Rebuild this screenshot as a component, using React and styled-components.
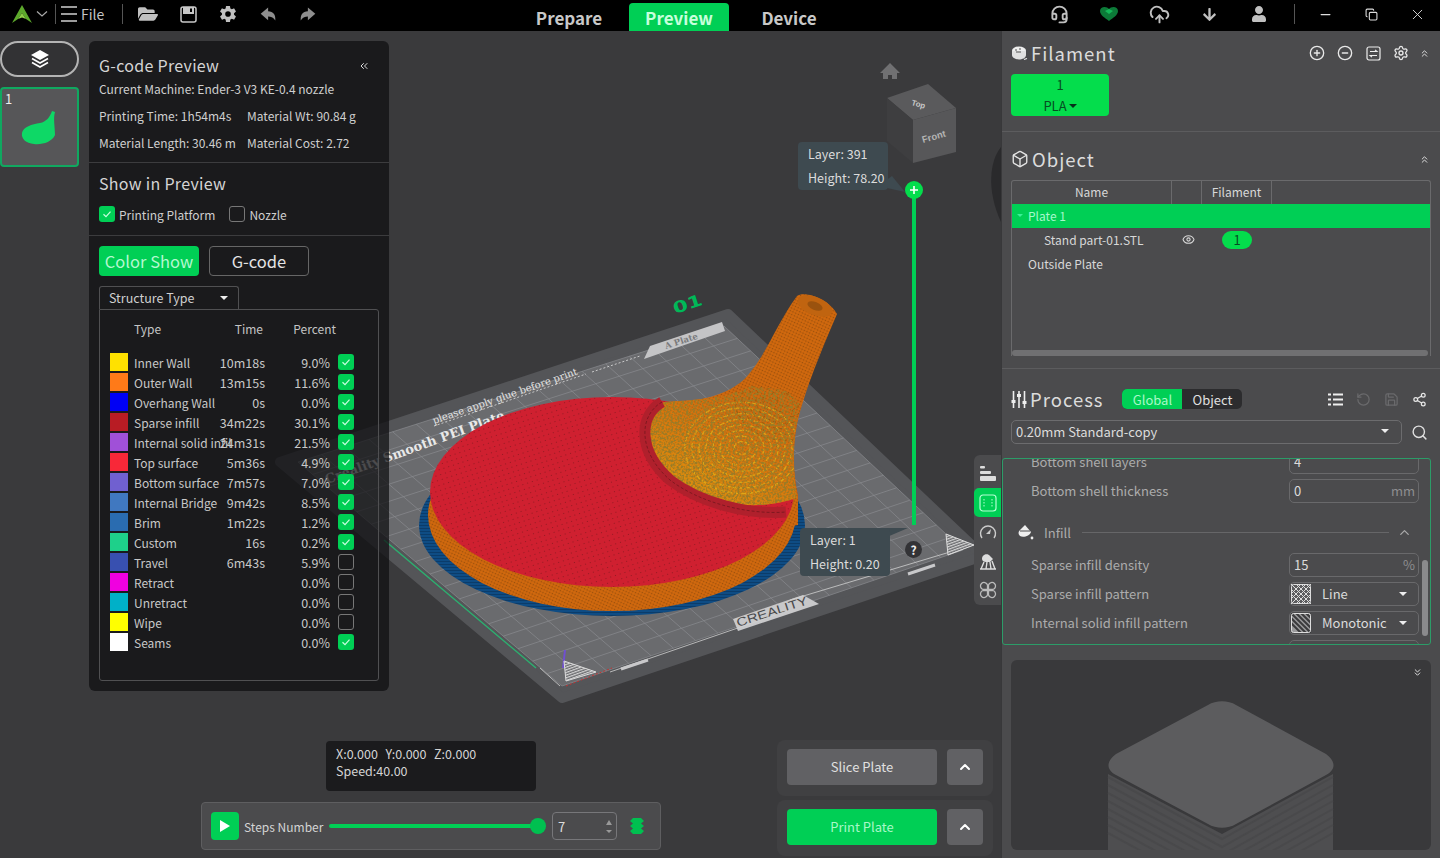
import React from 'react';
import styled, { createGlobalStyle } from 'styled-components';
import {
  Box, ChevronsDown, ChevronsLeft, ChevronsUp, ChevronUp, CircleMinus, CirclePlus,
  CloudUpload, Copy, Eye, Headset, Minus, RotateCcw, Save, Search, Settings, Share2, X,
} from 'lucide-react';
import { FaArrowDown, FaFolderOpen, FaUser } from 'react-icons/fa';
import { IoArrowRedoSharp, IoArrowUndoSharp, IoSettingsSharp } from 'react-icons/io5';

const GREEN = '#00cf55';
const BRIGHT = '#04dd4c';

const Global = createGlobalStyle`
  html, body { margin: 0; padding: 0; height: 100%; background: #3a3a3c; overflow: hidden; }
  body { font-family: "Noto Sans CJK SC", "Noto Sans", sans-serif; color: #d8d8d8; font-size: 13px; }
  * { box-sizing: border-box; }
`;

const Page = styled.div`
  width: 1440px;
  height: 858px;
  display: flex;
  flex-direction: column;
  overflow: hidden;
`;

/* ---- top bar ---- */

const TopBar = styled.header`
  flex: 0 0 31px;
  background: #000;
  display: grid;
  grid-template-columns: 519px 320px 1fr;
  align-items: center;
`;

const BarGroup = styled.div`
  display: flex;
  align-items: center;
  justify-content: ${p => (p.$end ? 'flex-end' : 'flex-start')};
  height: 31px;
  padding-bottom: 3px;
`;

const BarDivider = styled.span`
  width: 1px;
  height: 20px;
  background: #555;
  margin: ${p => p.$margin};
`;

const FileLabel = styled.span`
  font-size: 14px;
  color: #c4c4c4;
  margin-left: 4px;
`;

const LogoSlot = styled.span`
  display: flex;
  margin-left: 11px;
`;

const ToolIcon = styled.span`
  flex: 0 0 ${p => p.$w || 40}px;
  display: flex;
  align-items: center;
  justify-content: center;
  color: ${p => p.$color || '#c0c0c0'};
`;

const Tabs = styled.nav`
  display: flex;
  gap: 10px;
  height: 31px;
  align-items: flex-end;
`;

const Tab = styled.span`
  width: 100px;
  height: 28px;
  display: flex;
  align-items: center;
  justify-content: center;
  font-size: 17px;
  font-weight: 700;
  border-radius: 4px 4px 0 0;
  color: ${p => (p.$active ? '#c6ffdc' : '#c8c8c8')};
  background: ${p => (p.$active ? GREEN : 'transparent')};
`;

/* ---- main ---- */

const Main = styled.main`
  flex: 1;
  display: flex;
  min-height: 0;
`;

const Viewport = styled.div`
  position: relative;
  flex: 0 0 1001px;
  background: #3a3a3c;
  overflow: hidden;
`;

const SceneSvg = styled.svg`
  position: absolute;
  inset: 0;
  width: 1001px;
  height: 827px;
`;

const Dock = styled.div`
  position: relative;
  display: flex;
  align-items: flex-start;
  gap: 10px;
  padding-top: 10px;
`;

const Rail = styled.div`
  width: 79px;
  display: flex;
  flex-direction: column;
  gap: 10px;
`;

const PlatesButton = styled.div`
  height: 36px;
  border: 2px solid #b4b4b4;
  border-radius: 18px;
  background: #323234;
  display: flex;
  align-items: center;
  justify-content: center;
`;

const Thumb = styled.div`
  position: relative;
  height: 80px;
  border: 2px solid #10a860;
  border-radius: 4px;
  background: #565658;
  display: flex;
  align-items: center;
  justify-content: center;
  padding-top: 3px;
`;

const ThumbIndex = styled.span`
  position: absolute;
  top: 0;
  left: 3px;
  font-size: 13px;
  color: #eee;
`;

/* ---- g-code panel ---- */

const Panel = styled.aside`
  width: 300px;
  height: 650px;
  background: rgba(14, 14, 16, 0.72);
  border-radius: 6px;
  display: flex;
  flex-direction: column;
`;

const PanelSection = styled.section`
  padding: ${p => p.$pad};
  border-bottom: ${p => (p.$last ? 'none' : '1px solid #3c3c3e')};
  ${p => p.$last && 'flex: 1; display: flex; flex-direction: column;'}
`;

const PanelHead = styled.div`
  display: flex;
  justify-content: space-between;
  align-items: center;
  padding-right: 9px;
  color: #ddd;
`;

const PanelTitle = styled.h2`
  margin: 0;
  font-size: 16px;
  line-height: 21px;
  font-weight: 400;
  letter-spacing: 0.3px;
  color: #d4d4d4;
`;

const InfoGrid = styled.div`
  display: grid;
  grid-template-columns: 148px 1fr;
  grid-auto-rows: 27px;
  align-items: center;
  margin-top: -1px;
  font-size: 12px;
  color: #cfcfcf;
  white-space: nowrap;
`;

const InfoWide = styled.span`
  grid-column: 1 / -1;
`;

const CheckRow = styled.div`
  display: flex;
  align-items: center;
  height: 18px;
  font-size: 12px;
  color: #cfcfcf;
  margin-top: 11px;
`;

const CheckBox = styled.span`
  flex: none;
  width: 16px;
  height: 16px;
  border-radius: 3px;
  display: inline-flex;
  align-items: center;
  justify-content: center;
  background: ${p => (p.$on ? GREEN : 'transparent')};
  border: ${p => (p.$on ? 'none' : '1px solid #777')};
  margin: ${p => p.$margin || '0'};
`;

const ModeRow = styled.div`
  display: flex;
  gap: 10px;
`;

const ModeButton = styled.span`
  width: 100px;
  height: 30px;
  padding-bottom: 1px;
  border-radius: 4px;
  display: flex;
  align-items: center;
  justify-content: center;
  font-size: 16.5px;
  color: ${p => (p.$on ? '#b4f8d0' : '#e4e4e4')};
  background: ${p => (p.$on ? GREEN : 'transparent')};
  border: ${p => (p.$on ? 'none' : '1px solid #666')};
`;

const TypeSelect = styled.div`
  width: 140px;
  height: 23px;
  margin-top: 10px;
  padding: 0 10px 1px 9px;
  border: 1px solid #505052;
  border-bottom: none;
  border-radius: 3px 3px 0 0;
  display: flex;
  align-items: center;
  justify-content: space-between;
  font-size: 12.5px;
  color: #d0d0d0;
`;

const DownTriangle = styled.span`
  width: 0;
  height: 0;
  border-left: ${p => p.$s || 4}px solid transparent;
  border-right: ${p => p.$s || 4}px solid transparent;
  border-top: ${p => p.$s || 4}px solid ${p => p.$color || '#eee'};
`;

const TypeBox = styled.div`
  width: 280px;
  height: 372px;
  border: 1px solid #505052;
  border-radius: 0 3px 3px 3px;
  padding: 8px 10px 0;
  font-size: 12.5px;
`;

const TypeRow = styled.div`
  display: grid;
  grid-template-columns: 18px 104px 33px 65px 8px 16px;
  align-items: center;
  height: 20px;
  color: #c8c8c8;
  white-space: nowrap;
`;

const HeadRow = styled(TypeRow)`
  margin-bottom: 14px;
  font-size: 12px;
  color: #c4c4c4;
`;

const Swatch = styled.span`
  width: 18px;
  height: 18px;
  background: ${p => p.$color};
`;

const TypeName = styled.span`
  padding-left: 6px;
  font-size: 12px;
  overflow: hidden;
`;

const TypeNum = styled.span`
  justify-self: end;
`;

const HeadCell = styled.span`
  grid-column: ${p => p.$col};
  justify-self: ${p => p.$align || 'start'};
  padding-left: ${p => p.$pad || 0}px;
  margin-right: ${p => p.$mr || 0}px;
`;

/* ---- overlays on the 3d view ---- */

const LayerTip = styled.div`
  position: absolute;
  left: ${p => p.$x}px;
  top: ${p => p.$y}px;
  width: 90px;
  height: 48px;
  padding: 0 10px;
  background: #3e4a50;
  border-radius: 4px;
  font-size: 12.5px;
  line-height: 24px;
  color: #dcdcdc;
  white-space: nowrap;
`;

const SliderLine = styled.div`
  position: absolute;
  left: 912px;
  top: 159px;
  width: 4px;
  height: 335px;
  background: ${GREEN};
`;

const SliderKnob = styled.div`
  position: absolute;
  left: 905px;
  top: 150px;
  width: 18px;
  height: 18px;
  border-radius: 50%;
  background: ${BRIGHT};
  display: flex;
  align-items: center;
  justify-content: center;
`;

const HelpDot = styled.div`
  position: absolute;
  left: 905px;
  top: 510px;
  width: 17px;
  height: 17px;
  border-radius: 50%;
  background: #333336;
  color: #eee;
  font-size: 12px;
  font-weight: 700;
  display: flex;
  align-items: center;
  justify-content: center;
`;

const SideTabs = styled.div`
  position: absolute;
  right: 0;
  top: 424px;
  width: 27px;
  height: 150px;
  background: #4b4b4d;
  border-radius: 6px 0 0 6px;
  display: flex;
  flex-direction: column;
  align-items: center;
  padding-top: 3px;
`;

const SideTab = styled.span`
  flex: none;
  width: 27px;
  height: ${p => p.$h || 29}px;
  display: flex;
  align-items: center;
  justify-content: center;
  background: ${p => (p.$on ? GREEN : 'transparent')};
  border-radius: 5px 0 0 5px;
`;

const CoordBox = styled.div`
  position: absolute;
  left: 326px;
  top: 710px;
  width: 210px;
  height: 50px;
  padding: 4px 10px;
  background: #1b1b1d;
  border-radius: 4px;
  font-size: 12.5px;
  line-height: 17px;
  word-spacing: 1px;
  color: #d4d4d4;
  white-space: pre;
`;

const StepsBar = styled.div`
  position: absolute;
  left: 201px;
  top: 771px;
  width: 460px;
  height: 48px;
  padding-left: 9px;
  background: #4b4b4d;
  border: 1px solid #5e5e60;
  border-radius: 4px;
  display: flex;
  align-items: center;
`;

const PlayButton = styled.span`
  flex: none;
  width: 28px;
  height: 28px;
  border-radius: 4px;
  background: ${GREEN};
  display: flex;
  align-items: center;
  justify-content: center;
`;

const StepsLabel = styled.span`
  flex: none;
  width: 85px;
  margin-left: 5px;
  font-size: 12px;
  color: #d4d4d4;
  white-space: nowrap;
`;

const Track = styled.div`
  flex: none;
  position: relative;
  width: 209px;
  height: 4px;
  background: ${GREEN};
  border-radius: 2px;
  margin-right: 14px;
`;

const TrackKnob = styled.span`
  position: absolute;
  right: -8px;
  top: -6px;
  width: 16px;
  height: 16px;
  border-radius: 50%;
  background: #00c050;
`;

const StepInput = styled.div`
  flex: none;
  width: 65px;
  height: 28px;
  border: 1px solid #77777a;
  border-radius: 4px;
  padding: 0 4px 0 5px;
  display: flex;
  align-items: center;
  justify-content: space-between;
  color: #ddd;
`;

const Spinners = styled.span`
  display: flex;
  flex-direction: column;
  gap: 5px;
`;

const UpTriangle = styled.span`
  width: 0;
  height: 0;
  border-left: 3px solid transparent;
  border-right: 3px solid transparent;
  border-bottom: 5px solid #999;
`;

const ActionStack = styled.div`
  position: absolute;
  left: 777px;
  top: 709px;
  width: 216px;
  display: flex;
  flex-direction: column;
  gap: 4px;
`;

const ActionRow = styled.div`
  height: 56px;
  padding: 9px 10px;
  background: #404042;
  border-radius: 8px;
  display: flex;
  gap: 10px;
`;

const ActionButton = styled.span`
  flex: none;
  width: 150px;
  height: 36px;
  padding-bottom: 2px;
  border-radius: 4px;
  background: ${p => (p.$go ? GREEN : '#616164')};
  color: ${p => (p.$go ? '#a8f8c8' : '#e0e0e0')};
  display: flex;
  align-items: center;
  justify-content: center;
`;

const ActionMore = styled.span`
  flex: none;
  width: 36px;
  height: 36px;
  border-radius: 4px;
  background: #616164;
  color: #fff;
  display: flex;
  align-items: center;
  justify-content: center;
`;

/* ---- right sidebar ---- */

const Sidebar = styled.div`
  flex: 0 0 439px;
  background: #4b4b4d;
  border-left: 1px solid #38383a;
  display: flex;
  flex-direction: column;
`;

const SideSection = styled.section`
  height: ${p => p.$h}px;
  padding: ${p => p.$pad};
  border-bottom: ${p => (p.$line ? '1px solid #5c5c5e' : 'none')};
`;

const SectionHead = styled.div`
  height: 24px;
  display: flex;
  align-items: center;
  color: #e4e4e4;
`;

const SectionTitle = styled.h3`
  margin: 0 0 0 3px;
  font-size: 18.5px;
  font-weight: 400;
  letter-spacing: 1px;
  color: #dcdcdc;
`;

const HeadTools = styled.div`
  margin-left: auto;
  display: flex;
  align-items: center;
  color: #e8e8e8;
`;

const HeadTool = styled.span`
  width: ${p => p.$w || 28}px;
  display: flex;
  justify-content: center;
  color: ${p => p.$color || 'inherit'};
`;

const FilamentChip = styled.div`
  width: 98px;
  height: 42px;
  margin-top: 9px;
  border-radius: 4px;
  background: ${BRIGHT};
  color: #064d22;
  font-size: 13px;
  line-height: 21px;
  text-align: center;
`;

const ChipLine = styled.div`
  display: flex;
  align-items: center;
  justify-content: center;
  gap: 2px;
`;

const ObjectTable = styled.div`
  position: relative;
  width: 420px;
  height: 176px;
  margin-top: 9px;
  border: 1px solid #6a6a6c;
  border-bottom-width: 0;
  border-radius: 3px 3px 0 0;
  color: #d8d8d8;
  font-size: 12px;
`;

const TableHead = styled.div`
  display: grid;
  grid-template-columns: 160px 30px 70px 1fr;
  height: 23px;
`;

const HeadCol = styled.span`
  display: flex;
  align-items: center;
  justify-content: center;
  padding-bottom: 3px;
  border-right: ${p => (p.$open ? 'none' : '1px solid #6a6a6c')};
`;

const PlateRow = styled.div`
  height: 24px;
  padding: 0 0 1px 5px;
  background: ${GREEN};
  color: #a6f8cc;
  display: flex;
  align-items: center;
  gap: 5px;
`;

const ObjRow = styled.div`
  display: grid;
  grid-template-columns: ${p => (p.$sub ? '32px 138px 30px auto' : '16px 1fr')};
  align-items: center;
  height: 24px;
  padding-bottom: 1px;
`;

const FilamentPill = styled.span`
  width: 30px;
  height: 18px;
  border-radius: 9px;
  background: ${BRIGHT};
  color: #064d22;
  font-size: 13px;
  display: flex;
  align-items: center;
  justify-content: center;
  margin-left: 10px;
`;

const HScroll = styled.div`
  position: absolute;
  left: 0;
  right: 2px;
  bottom: 0;
  height: 6px;
  background: #707072;
  border-radius: 3px;
`;

const ModeSwitch = styled.div`
  display: flex;
  width: 120px;
  height: 20px;
  margin-left: 19px;
  background: #2c2c2e;
  border-radius: 5px;
  font-size: 13px;
  overflow: hidden;
`;

const SwitchItem = styled.span`
  width: 60px;
  display: flex;
  align-items: center;
  justify-content: center;
  background: ${p => (p.$on ? GREEN : 'transparent')};
  color: ${p => (p.$on ? '#a8f8c8' : '#e0e0e0')};
`;

const PresetRow = styled.div`
  display: flex;
  align-items: center;
  gap: 9px;
  margin-top: 9px;
  color: #e0e0e0;
`;

const PresetSelect = styled.div`
  width: 391px;
  height: 24px;
  padding: 0 12px 2px 4px;
  border: 1px solid #6c6c6e;
  border-radius: 5px;
  display: flex;
  align-items: center;
  justify-content: space-between;
  font-size: 13px;
  color: #dcdcdc;
`;

const SettingsBox = styled.div`
  position: relative;
  width: 429px;
  height: 187px;
  margin: 14px 0 0 -9px;
  border: 1px solid #2c9c68;
  border-radius: 3px;
  overflow: hidden;
`;

const SettingsFlow = styled.div`
  margin-top: -12px;
  padding: 0 11px 0 28px;
  font-size: 13px;
  color: #acacac;
`;

const SettingRow = styled.div`
  display: flex;
  align-items: center;
  justify-content: space-between;
  height: 29px;
  margin-bottom: ${p => p.$after || 0}px;
`;

const Field = styled.div`
  width: 130px;
  height: 24px;
  padding: 0 3px 0 4px;
  border: 1px solid #69696b;
  border-radius: 5px;
  display: flex;
  align-items: center;
  justify-content: space-between;
  color: #dcdcdc;
  font-size: 13px;
`;

const FieldUnit = styled.span`
  color: #8e8e90;
`;

const PatternField = styled(Field)`
  padding: 0 11px 0 1px;
`;

const PatternName = styled.span`
  flex: 1;
  margin-left: 11px;
`;

const GroupHead = styled.div`
  display: flex;
  align-items: center;
  height: 24px;
  margin: 0 0 6px -14px;
`;

const GroupLabel = styled.span`
  margin-left: 10px;
`;

const GroupRule = styled.span`
  flex: 1;
  height: 1px;
  background: #666668;
  margin-left: 11px;
`;

const GroupChevron = styled.span`
  width: 30px;
  display: flex;
  justify-content: center;
  color: #aaa;
`;

const VScroll = styled.div`
  position: absolute;
  right: 2px;
  top: 101px;
  width: 6px;
  height: 76px;
  background: #8a8a8c;
  border-radius: 3px;
`;

const ModelPreview = styled.div`
  position: relative;
  width: 420px;
  height: 190px;
  margin-top: 15px;
  background: #39393b;
  border-radius: 6px;
  overflow: hidden;
`;

const PreviewToggle = styled.span`
  position: absolute;
  top: 7px;
  right: 8px;
  color: #eee;
  display: flex;
`;

const CubeSvg = styled.svg`
  display: block;
  width: 420px;
  height: 190px;
`;

/* ---- drawings ---- */

const Logo = () => (
  <svg width="22" height="20" viewBox="0 0 22 20">
    <path d="M11 1 L21 19 L15 15 L11 9 L7 15 L1 19 Z" fill="#5da92c" />
    <path d="M11 9 L15 15 L11 13.5 L7 15 Z" fill="#8fd048" />
  </svg>
);

const SmallChevron = () => (
  <svg width="12" height="8" viewBox="0 0 12 8" style={{ marginLeft: 3 }}>
    <path d="M1 1.5 L6 6 L11 1.5" fill="none" stroke="#aaa" strokeWidth="1.2" />
  </svg>
);

const Hamburger = () => (
  <svg width="16" height="18" viewBox="0 0 16 18">
    <path d="M0 2 H16 M0 9 H16 M0 16 H16" stroke="#d0d0d0" strokeWidth="1.6" />
  </svg>
);

const Floppy = () => (
  <svg width="17" height="17" viewBox="0 0 17 17">
    <rect x="1" y="1" width="15" height="15" rx="2" fill="none" stroke="#c8c8c8" strokeWidth="1.5" />
    <rect x="3" y="1" width="11" height="7" fill="#c8c8c8" />
    <rect x="10" y="2.5" width="2" height="3.5" fill="#000" />
  </svg>
);

const Heart = () => (
  <svg width="20" height="16" viewBox="0 0 20 16">
    <path d="M10 3 C8 0 1 0 1 5 C1 9 6 12 10 15 C14 12 19 9 19 5 C19 0 12 0 10 3 Z" fill="#0c7a38" />
    <path d="M10 3 L14 5 L10 8 L6 5 Z" fill="#14b858" />
  </svg>
);

const LayersIcon = () => (
  <svg width="22" height="20" viewBox="0 0 22 20">
    <path d="M11 1 L20 6 L11 11 L2 6 Z" fill="#fff" />
    <path d="M3 9.5 L11 14 L19 9.5 M3 13.5 L11 18 L19 13.5" fill="none" stroke="#fff" strokeWidth="1.6" />
  </svg>
);

const PaddleThumb = () => (
  <svg width="40" height="40" viewBox="0 0 40 40">
    <path d="M32 2 L35 3 C33 9 35 18 35 26 C32 33 22 36 14 35 C6 34 1 30 2 24 C3 18 12 15 20 14 C26 13 30 8 32 2 Z" fill="#0ed866" />
  </svg>
);

const Tick = ({ size = 10 }) => (
  <svg width={size} height={size} viewBox="0 0 10 10">
    <path d="M1.5 5.2 L4 7.6 L8.5 2.6" fill="none" stroke="#c8ffe0" strokeWidth="1.2" />
  </svg>
);

const SpoolIcon = () => (
  <svg width="17" height="15" viewBox="0 0 17 15">
    <ellipse cx="8" cy="4.5" rx="7" ry="4" fill="#eee" />
    <path d="M1 5 V9 C1 12 5 13.5 8 13.5 C11 13.5 15 12 15 9 V5" fill="#e0e0e0" />
    <path d="M4 4 h2 M8 3 h2 M5 6 h5" stroke="#555" strokeWidth="1" />
    <path d="M13 13.5 L16 12.5" stroke="#eee" strokeWidth="1.2" />
  </svg>
);

const SwapIcon = () => (
  <svg width="15" height="15" viewBox="0 0 15 15">
    <rect x="1" y="1" width="13" height="13" rx="2" fill="none" stroke="#eee" strokeWidth="1.2" />
    <path d="M4 5.5 H11 L9 3.8 M11 9.5 H4 L6 11.2" fill="none" stroke="#eee" strokeWidth="1.1" />
  </svg>
);

const SlidersIcon = () => (
  <svg width="16" height="17" viewBox="0 0 16 17">
    <path d="M2.5 0 V17 M8 0 V17 M13.5 0 V17" stroke="#eee" strokeWidth="1.6" />
    <rect x="0.5" y="9" width="4" height="3" fill="#eee" />
    <rect x="6" y="3" width="4" height="3" fill="#eee" />
    <rect x="11.5" y="10" width="4" height="3" fill="#eee" />
  </svg>
);

const ListIcon = () => (
  <svg width="15" height="13" viewBox="0 0 15 13">
    <path d="M5 1.5 H15 M5 6.5 H15 M5 11.5 H15 M0 1.5 H3 M0 6.5 H3 M0 11.5 H3" stroke="#eee" strokeWidth="2" />
  </svg>
);

const BucketIcon = () => (
  <svg width="17" height="16" viewBox="0 0 17 16">
    <path d="M3 6 L8 1 L14 8 C13 12 6 14 3 12 C1 10 1 8 3 6 Z" fill="#eee" />
    <path d="M3 7 H13" stroke="#4b4b4d" strokeWidth="1" />
    <circle cx="15" cy="14" r="1.4" fill="#eee" />
  </svg>
);

const HatchIcon = ({ cross }) => (
  <svg width="20" height="20" viewBox="0 0 20 20">
    <rect x="0.5" y="0.5" width="19" height="19" rx="2" fill={cross ? '#5c5c5e' : '#9a9a9c'} />
    {Array.from({ length: 7 }, (_, i) => (
      <path key={i} d={`M${i * 5 - 10} 0 L${i * 5 + 10} 20`} stroke={cross ? '#ddd' : '#3a3a3c'} strokeWidth={cross ? 1 : 2} />
    ))}
    {cross && Array.from({ length: 7 }, (_, i) => (
      <path key={i} d={`M${i * 5 - 10} 20 L${i * 5 + 10} 0`} stroke="#ddd" strokeWidth="1" />
    ))}
    <rect x="0.5" y="0.5" width="19" height="19" rx="2" fill="none" stroke="#ddd" />
  </svg>
);

const StackIcon = () => (
  <svg width="18" height="18" viewBox="0 0 18 18">
    <path d="M5 1 H13 L16 4 L13 6.5 L16 9 L13 11.5 L16 14 L13 17 H5 L2 14 L5 11.5 L2 9 L5 6.5 L2 4 Z" fill="#00c050" />
  </svg>
);

/* the build plate is a quad in perspective: grid lines are interpolated between its corners */
const lerp = (a, b, t) => [a[0] + (b[0] - a[0]) * t, a[1] + (b[1] - a[1]) * t];
const fmt = p => `${p[0].toFixed(1)} ${p[1].toFixed(1)}`;
const IT = [724, 326];
const IR = [963, 550];
const IB = [562, 686];
const IL = [298, 462];
const DIVS = 18;

function plateGrid() {
  const lines = [];
  for (let i = 0; i <= DIVS; i++) {
    const t = i / DIVS;
    lines.push(`M${fmt(lerp(IL, IT, t))} L${fmt(lerp(IB, IR, t))}`);
    lines.push(`M${fmt(lerp(IL, IB, t))} L${fmt(lerp(IT, IR, t))}`);
  }
  return lines.join(' ');
}

const HANDLE = 'M640 404 C700 404 735 395 752 370 C768 350 778 322 797 296 C805 290 830 300 837 314 C826 340 812 372 802 405 C792 436 792 470 798 495 L798 525 L700 540 Z';
const CRESCENT = 'M664 402 C640 416 640 452 672 478 C708 506 755 512 797 498 C791 462 794 430 800 405 C790 385 770 390 752 386 C720 400 690 400 664 402 Z';
const RING = 'M662 402 C638 416 638 452 670 480 C700 503 748 515 786 512';

// concentric toolpath swirls over the infill crescent
const swirlSet = (cx, cy, count) => Array.from({ length: count }, (_, i) => {
  const r = 8 + i * 7;
  return `M${cx - r} ${cy} A${r} ${r * 0.8} 0 1 1 ${cx + r} ${cy} A${r} ${r * 0.8} 0 1 1 ${cx - r} ${cy}`;
}).join(' ');

const Scene = () => (
  <SceneSvg viewBox="0 31 1001 827">
    <defs>
      <pattern id="redDots" width="5" height="5" patternUnits="userSpaceOnUse" patternTransform="rotate(-18)">
        <rect width="5" height="5" fill="#cf2030" />
        <circle cx="2.5" cy="2.5" r="0.6" fill="#8c1820" />
      </pattern>
      <pattern id="orangeWeave" width="3" height="3" patternUnits="userSpaceOnUse" patternTransform="rotate(25)">
        <rect width="3" height="3" fill="#d2690e" />
        <circle cx="1.5" cy="1.5" r="0.85" fill="#9a500c" />
      </pattern>
      <linearGradient id="infillFade" x1="0.1" y1="1" x2="0.8" y2="0">
        <stop offset="0" stopColor="#e8c410" stopOpacity="0.6" />
        <stop offset="0.6" stopColor="#e89010" stopOpacity="0.3" />
        <stop offset="1" stopColor="#e07310" stopOpacity="0.05" />
      </linearGradient>
      <filter id="mottle" x="0" y="0" width="1" height="1">
        <feTurbulence type="fractalNoise" baseFrequency="0.45" numOctaves="2" seed="4" />
        <feColorMatrix values="0 0 0 0 0.32  0 0 0 0 0.2  0 0 0 0 0.02  0 0 0 4 -1.7" />
        <feComposite in2="SourceGraphic" operator="in" />
      </filter>
      <pattern id="blueBrim" width="3" height="3" patternUnits="userSpaceOnUse">
        <rect width="3" height="3" fill="#0e4c84" />
        <rect width="3" height="1" fill="#0b3c6a" />
      </pattern>
      <pattern id="logoHatch" width="2.5" height="2.5" patternUnits="userSpaceOnUse" patternTransform="rotate(70)">
        <rect width="2.5" height="2.5" fill="#6a6b6e" />
        <rect width="1.2" height="2.5" fill="#d4d4d4" />
      </pattern>
      <clipPath id="crescentClip"><path d={CRESCENT} /></clipPath>
    </defs>

    <polygon points="728,314 983,556 562,698 280,462" fill="#545558" stroke="#545558" strokeWidth="10" strokeLinejoin="round" />
    <polygon points={`${IT} ${IR} ${IB} ${IL}`} fill="#6a6b6e" />
    <path d={plateGrid()} stroke="#8a8b8f" strokeWidth="0.7" fill="none" />

    <path d="M434 426 L586 374 M592 372 L640 356" stroke="#e0e0e0" strokeWidth="0.8" strokeDasharray="2 2" />
    <text x="434" y="424" transform="rotate(-19 434 424)" fontFamily="DejaVu Serif, serif" fontSize="10" fill="#e4e4e4">please apply glue before print</text>
    <text x="327" y="484" transform="rotate(-20 327 484)" fontFamily="DejaVu Serif, serif" fontSize="13" fontWeight="700" fill="#e8e8e8">Creality Smooth PEI Plate</text>
    <polygon points="644,359 650,346 722,322 725,331" fill="#c4c4c6" />
    <text x="666" y="349" transform="rotate(-18 666 349)" fontFamily="DejaVu Serif, serif" fontSize="8.5" fontWeight="700" fill="#7a7a7c">A Plate</text>
    <polygon points="733,619 803,595 819,604 738,631" fill="#c8c8ca" />
    <text x="738" y="627" transform="rotate(-18 738 627)" fontFamily="Liberation Sans, sans-serif" fontSize="12" fill="#4a4a4c" textLength="74" lengthAdjust="spacingAndGlyphs">CREALITY</text>
    <text x="675" y="314" transform="rotate(-18 675 314)" fontFamily="DejaVu Sans, sans-serif" fontSize="16" fontWeight="700" fill="#00b858" textLength="30" lengthAdjust="spacingAndGlyphs">01</text>

    <path d="M384 540 L536 668" stroke="#2cb070" strokeWidth="1.4" />
    <path d="M540 668 L560 686 M790 600 L950 552 M610 672 L790 610" stroke="#d0d0d0" strokeWidth="0.8" />
    <path d="M621 669 L648 660 M908 574 L935 565" stroke="#c8c8ca" strokeWidth="3" />
    <path d="M565 650 L563 668" stroke="#7050d0" strokeWidth="2" />
    <path d="M566 686 L612 668" stroke="#c83030" strokeWidth="1" strokeDasharray="2 2" />
    <polygon points="564,661 596,672 566,681" fill="url(#logoHatch)" stroke="#ddd" strokeWidth="1" />
    <polygon points="946,534 974,545 948,555" fill="url(#logoHatch)" stroke="#ddd" strokeWidth="1" />

    <ellipse cx="612" cy="525" rx="193" ry="91" fill="url(#blueBrim)" />
    <ellipse cx="612" cy="515" rx="184" ry="96" fill="url(#orangeWeave)" />
    <path d={HANDLE} fill="url(#orangeWeave)" />
    <ellipse cx="815" cy="306" rx="18" ry="9" transform="rotate(22 815 306)" fill="#c06410" />
    <ellipse cx="815" cy="306" rx="8" ry="4" transform="rotate(22 815 306)" fill="#9a520e" />
    <ellipse cx="612" cy="492" rx="182" ry="95" fill="url(#redDots)" />
    <path d={CRESCENT} fill="url(#orangeWeave)" />
    <path d={CRESCENT} fill="url(#infillFade)" />
    <g clipPath="url(#crescentClip)">
      <path d={swirlSet(742, 448, 8)} fill="none" stroke="#e0b018" strokeWidth="1.4" strokeDasharray="5 2" opacity="0.8" />
      <path d={swirlSet(785, 400, 7)} fill="none" stroke="#8a5c10" strokeWidth="1.2" strokeDasharray="3 3" opacity="0.7" />
    </g>
    <path d={CRESCENT} fill="#000" filter="url(#mottle)" />
    <path d={RING} fill="none" stroke="#b0202c" strokeWidth="11" />
    <path d={RING} fill="none" stroke="#801820" strokeWidth="1" strokeDasharray="3 2" />

    <path d="M880 73 L890 63 L900 73 H897 V79 H892 V75 H888 V79 H883 V73 Z" fill="#707072" />
    <polygon points="887,98 928,84 956,108 913,120" fill="#5a5a5c" />
    <polygon points="913,120 956,108 956,152 913,163" fill="#575759" />
    <polygon points="887,98 913,120 913,163 887,141" fill="#3e3e40" />
    <text x="911" y="105" transform="rotate(15 911 105)" fontFamily="Liberation Sans, sans-serif" fontSize="8" fontWeight="700" fill="#c8c8c8">Top</text>
    <text x="923" y="143" transform="rotate(-16 923 143)" fontFamily="Liberation Sans, sans-serif" fontSize="9.5" fontWeight="700" fill="#b4b4b4">Front</text>
    <text x="895" y="128" transform="rotate(40 895 128) scale(0.7 1)" fontFamily="Liberation Sans, sans-serif" fontSize="9" fill="#9a9a9c">Left</text>

    <polygon points="878,186 905,192 892,176" fill="#3e4a50" />
    <polygon points="880,528 908,528 880,540" fill="#3e4a50" />
    <path d="M1001 147 C990 160 986 190 1001 222 Z" fill="#2a2a2c" />
  </SceneSvg>
);

const rows = [
  ['#ffe100', 'Inner Wall', '10m18s', '9.0%', 1],
  ['#ff7a18', 'Outer Wall', '13m15s', '11.6%', 1],
  ['#0000f5', 'Overhang Wall', '0s', '0.0%', 1],
  ['#b81c24', 'Sparse infill', '34m22s', '30.1%', 1],
  ['#a050d8', 'Internal solid infill', '24m31s', '21.5%', 1],
  ['#f82838', 'Top surface', '5m36s', '4.9%', 1],
  ['#7060d0', 'Bottom surface', '7m57s', '7.0%', 1],
  ['#4078c0', 'Internal Bridge', '9m42s', '8.5%', 1],
  ['#2a6cb0', 'Brim', '1m22s', '1.2%', 1],
  ['#1ed08a', 'Custom', '16s', '0.2%', 1],
  ['#3850b0', 'Travel', '6m43s', '5.9%', 0],
  ['#f000e0', 'Retract', '', '0.0%', 0],
  ['#00b0c8', 'Unretract', '', '0.0%', 0],
  ['#ffff00', 'Wipe', '', '0.0%', 0],
  ['#ffffff', 'Seams', '', '0.0%', 1],
];

const IsoStack = () => (
  <CubeSvg viewBox="1011 661 420 190">
    <path d="M1108 775 V851 H1333 V775 L1222 835 Z" fill="#4e4e50" />
    {Array.from({ length: 8 }, (_, i) => (
      <path key={i} d={`M1108 ${778 + i * 8} L1222 ${840 + i * 8} L1333 ${778 + i * 8}`} fill="none" stroke="#49494b" strokeWidth="2" />
    ))}
    <path d="M1208 706 C1216 701 1228 701 1236 706 L1326 755 C1336 762 1336 771 1326 776 L1236 825 C1228 830 1216 830 1208 825 L1116 776 C1106 771 1106 762 1116 755 Z" fill="#5c5c5e" />
  </CubeSvg>
);

export default function App() {
  return (
    <Page>
      <Global />
      <TopBar>
        <BarGroup>
          <LogoSlot><Logo /></LogoSlot>
          <SmallChevron />
          <BarDivider $margin="0 5px 0 7px" />
          <Hamburger />
          <FileLabel>File</FileLabel>
          <BarDivider $margin="0 5px 0 18px" />
          <ToolIcon><FaFolderOpen size={20} /></ToolIcon>
          <ToolIcon><Floppy /></ToolIcon>
          <ToolIcon><IoSettingsSharp size={18} /></ToolIcon>
          <ToolIcon $color="#8e8e8e"><IoArrowUndoSharp size={18} /></ToolIcon>
          <ToolIcon $color="#8e8e8e"><IoArrowRedoSharp size={18} /></ToolIcon>
        </BarGroup>
        <Tabs>
          <Tab>Prepare</Tab>
          <Tab $active>Preview</Tab>
          <Tab>Device</Tab>
        </Tabs>
        <BarGroup $end>
          <ToolIcon $w={50}><Headset size={19} strokeWidth={2.4} /></ToolIcon>
          <ToolIcon $w={50}><Heart /></ToolIcon>
          <ToolIcon $w={50}><CloudUpload size={21} strokeWidth={2.2} /></ToolIcon>
          <ToolIcon $w={50}><FaArrowDown size={15} /></ToolIcon>
          <ToolIcon $w={50}><FaUser size={16} /></ToolIcon>
          <BarDivider $margin="0 7px 0 10px" />
          <ToolIcon $w={46} $color="#ddd"><Minus size={15} /></ToolIcon>
          <ToolIcon $w={46} $color="#ddd"><Copy size={13} /></ToolIcon>
          <ToolIcon $w={46} $color="#ddd"><X size={17} strokeWidth={1.3} /></ToolIcon>
        </BarGroup>
      </TopBar>

      <Main>
        <Viewport>
          <Scene />
          <Dock>
            <Rail>
              <PlatesButton><LayersIcon /></PlatesButton>
              <Thumb>
                <ThumbIndex>1</ThumbIndex>
                <PaddleThumb />
              </Thumb>
            </Rail>
            <Panel>
              <PanelSection $pad="14px 10px 6px">
                <PanelHead>
                  <PanelTitle>G-code Preview</PanelTitle>
                  <ChevronsLeft size={12} />
                </PanelHead>
                <InfoGrid>
                  <InfoWide>Current Machine: Ender-3 V3 KE-0.4 nozzle</InfoWide>
                  <span>Printing Time: 1h54m4s</span>
                  <span>Material Wt: 90.84 g</span>
                  <span>Material Length: 30.46 m</span>
                  <span>Material Cost: 2.72</span>
                </InfoGrid>
              </PanelSection>
              <PanelSection $pad="10px 10px 12px">
                <PanelTitle>Show in Preview</PanelTitle>
                <CheckRow>
                  <CheckBox $on $margin="0 4px 0 0"><Tick /></CheckBox>
                  Printing Platform
                  <CheckBox $margin="0 4px 0 14px" />
                  Nozzle
                </CheckRow>
              </PanelSection>
              <PanelSection $last $pad="10px 10px 0">
                <ModeRow>
                  <ModeButton $on>Color Show</ModeButton>
                  <ModeButton>G-code</ModeButton>
                </ModeRow>
                <TypeSelect>
                  Structure Type
                  <DownTriangle />
                </TypeSelect>
                <TypeBox>
                  <HeadRow>
                    <HeadCell $col="2" $pad={6}>Type</HeadCell>
                    <HeadCell $col="3" $align="end" $mr={2}>Time</HeadCell>
                    <HeadCell $col="4" $align="end" $mr={-6}>Percent</HeadCell>
                  </HeadRow>
                  {rows.map(([color, name, time, pct, on]) => (
                    <TypeRow key={name}>
                      <Swatch $color={color} />
                      <TypeName>{name}</TypeName>
                      <TypeNum>{time}</TypeNum>
                      <TypeNum>{pct}</TypeNum>
                      <span />
                      <CheckBox $on={!!on}>{on ? <Tick /> : null}</CheckBox>
                    </TypeRow>
                  ))}
                </TypeBox>
              </PanelSection>
            </Panel>
          </Dock>

          <LayerTip $x={798} $y={111}>Layer: 391<br />Height: 78.20</LayerTip>
          <SliderLine />
          <SliderKnob>
            <svg width="10" height="10" viewBox="0 0 10 10"><path d="M5 1 V9 M1 5 H9" stroke="#fff" strokeWidth="1.6" /></svg>
          </SliderKnob>
          <LayerTip $x={800} $y={497}>Layer: 1<br />Height: 0.20</LayerTip>
          <HelpDot>?</HelpDot>

          <SideTabs>
            <SideTab $h={30}>
              <svg width="18" height="18" viewBox="0 0 18 18">
                <rect x="1" y="2" width="5" height="2.5" rx="1" fill="#ddd" />
                <rect x="1" y="7" width="11" height="3" rx="1" fill="#ddd" />
                <rect x="1" y="12" width="16" height="5" rx="1" fill="#ddd" />
              </svg>
            </SideTab>
            <SideTab $on>
              <svg width="18" height="18" viewBox="0 0 18 18">
                <rect x="1" y="1" width="16" height="16" rx="3" fill="none" stroke="#b4ffd4" strokeWidth="1.2" />
                <path d="M5 5 V13 M13 5 V13" stroke="#b4ffd4" strokeWidth="1" strokeDasharray="1.5 1.5" />
              </svg>
            </SideTab>
            <SideTab>
              <svg width="18" height="16" viewBox="0 0 18 16">
                <path d="M3 14 A7.5 7.5 0 1 1 15 14" fill="none" stroke="#ccc" strokeWidth="1.4" />
                <path d="M7 10 L12 5 L11 10 Z" fill="#ccc" />
              </svg>
            </SideTab>
            <SideTab>
              <svg width="18" height="18" viewBox="0 0 18 18">
                <path d="M3 7 C3 2 9 1 11 4 L14 7 L11 10 H7 C5 10 3 9 3 7 Z" fill="#ddd" />
                <path d="M2 17 L5 10 M7 17 L8 10 M12 17 L11 10 M16 17 L13 9 M1 17 H17" stroke="#ddd" strokeWidth="1.4" />
              </svg>
            </SideTab>
            <SideTab>
              <svg width="20" height="20" viewBox="0 0 20 20" fill="none" stroke="#bbb" strokeWidth="1.3">
                <path d="M9.5 9.5 H5 A3.6 3.6 0 1 1 9.5 5 Z" />
                <path d="M10.5 9.5 H15 A3.6 3.6 0 1 0 10.5 5 Z" />
                <path d="M9.5 10.5 H5 A3.6 3.6 0 1 0 9.5 15 Z" />
                <path d="M10.5 10.5 H15 A3.6 3.6 0 1 1 10.5 15 Z" />
              </svg>
            </SideTab>
          </SideTabs>

          <CoordBox>{'X:0.000  Y:0.000  Z:0.000\nSpeed:40.00'}</CoordBox>

          <StepsBar>
            <PlayButton>
              <svg width="12" height="14" viewBox="0 0 12 14"><path d="M1 1 L11 7 L1 13 Z" fill="#fff" /></svg>
            </PlayButton>
            <StepsLabel>Steps Number</StepsLabel>
            <Track><TrackKnob /></Track>
            <StepInput>
              7
              <Spinners><UpTriangle /><DownTriangle $s={3} $color="#999" /></Spinners>
            </StepInput>
            <ToolIcon $w={40}><StackIcon /></ToolIcon>
          </StepsBar>

          <ActionStack>
            <ActionRow>
              <ActionButton>Slice Plate</ActionButton>
              <ActionMore><ChevronUp size={16} strokeWidth={3} /></ActionMore>
            </ActionRow>
            <ActionRow>
              <ActionButton $go>Print Plate</ActionButton>
              <ActionMore><ChevronUp size={16} strokeWidth={3} /></ActionMore>
            </ActionRow>
          </ActionStack>
        </Viewport>

        <Sidebar>
          <SideSection $h={101} $line $pad="10px 7px 0 9px">
            <SectionHead>
              <SpoolIcon />
              <SectionTitle>Filament</SectionTitle>
              <HeadTools>
                <HeadTool><CirclePlus size={16} /></HeadTool>
                <HeadTool><CircleMinus size={16} /></HeadTool>
                <HeadTool><SwapIcon /></HeadTool>
                <HeadTool><Settings size={16} /></HeadTool>
                <HeadTool $w={18}><ChevronsUp size={11} /></HeadTool>
              </HeadTools>
            </SectionHead>
            <FilamentChip>
              1
              <ChipLine>PLA <DownTriangle $color="#06301a" /></ChipLine>
            </FilamentChip>
          </SideSection>

          <SideSection $h={237} $line $pad="15px 7px 0 9px">
            <SectionHead>
              <Box size={18} strokeWidth={1.8} />
              <SectionTitle>Object</SectionTitle>
              <HeadTools><HeadTool $w={18}><ChevronsUp size={11} /></HeadTool></HeadTools>
            </SectionHead>
            <ObjectTable>
              <TableHead>
                <HeadCol>Name</HeadCol>
                <HeadCol />
                <HeadCol>Filament</HeadCol>
                <HeadCol $open />
              </TableHead>
              <PlateRow>
                <DownTriangle $s={3} $color="#3cf098" />
                Plate 1
              </PlateRow>
              <ObjRow $sub>
                <span />
                Stand part-01.STL
                <Eye size={13} />
                <FilamentPill>1</FilamentPill>
              </ObjRow>
              <ObjRow>
                <span />
                Outside Plate
              </ObjRow>
              <HScroll />
            </ObjectTable>
          </SideSection>

          <SideSection $h={489} $pad="18px 7px 0 9px">
            <SectionHead>
              <SlidersIcon />
              <SectionTitle>Process</SectionTitle>
              <ModeSwitch>
                <SwitchItem $on>Global</SwitchItem>
                <SwitchItem>Object</SwitchItem>
              </ModeSwitch>
              <HeadTools>
                <HeadTool><ListIcon /></HeadTool>
                <HeadTool $color="#6a6a6c"><RotateCcw size={15} /></HeadTool>
                <HeadTool $color="#6a6a6c"><Save size={15} /></HeadTool>
                <HeadTool><Share2 size={15} /></HeadTool>
              </HeadTools>
            </SectionHead>
            <PresetRow>
              <PresetSelect>
                0.20mm Standard-copy
                <DownTriangle />
              </PresetSelect>
              <Search size={17} />
            </PresetRow>
            <SettingsBox>
              <SettingsFlow>
                <SettingRow>Bottom shell layers<Field>4</Field></SettingRow>
                <SettingRow $after={15}>Bottom shell thickness<Field>0<FieldUnit>mm</FieldUnit></Field></SettingRow>
                <GroupHead>
                  <BucketIcon />
                  <GroupLabel>Infill</GroupLabel>
                  <GroupRule />
                  <GroupChevron><ChevronUp size={15} /></GroupChevron>
                </GroupHead>
                <SettingRow>Sparse infill density<Field>15<FieldUnit>%</FieldUnit></Field></SettingRow>
                <SettingRow>
                  Sparse infill pattern
                  <PatternField><HatchIcon cross /><PatternName>Line</PatternName><DownTriangle /></PatternField>
                </SettingRow>
                <SettingRow>
                  Internal solid infill pattern
                  <PatternField><HatchIcon /><PatternName>Monotonic</PatternName><DownTriangle /></PatternField>
                </SettingRow>
                <SettingRow><span /><Field /></SettingRow>
              </SettingsFlow>
              <VScroll />
            </SettingsBox>
            <ModelPreview>
              <IsoStack />
              <PreviewToggle><ChevronsDown size={11} /></PreviewToggle>
            </ModelPreview>
          </SideSection>
        </Sidebar>
      </Main>
    </Page>
  );
}
